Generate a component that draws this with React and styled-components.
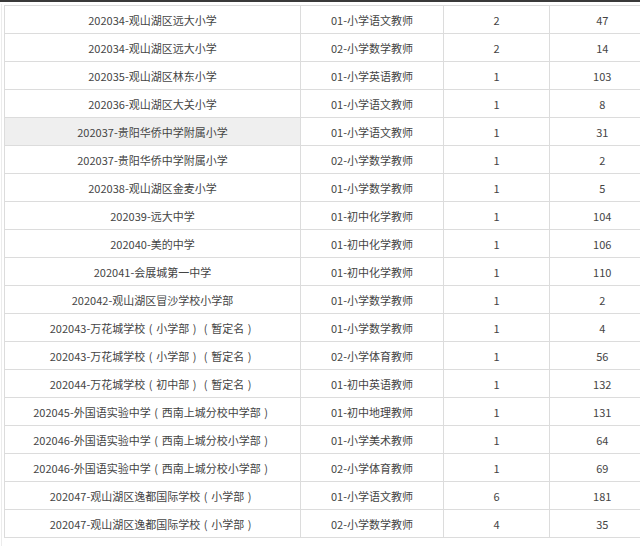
import React from "react";
import styled, { createGlobalStyle } from "styled-components";

const Global = createGlobalStyle`
  html, body { margin: 0; padding: 0; background: #fff; }
  body { font-family: "Noto Sans CJK SC", "Noto Sans", sans-serif; overflow: hidden; }
`;

const Page = styled.div`
  width: 640px;
  height: 556px;
  overflow: hidden;
  border-top: 2px solid #3a3a3a;
  box-sizing: border-box;
  padding: 3px 0 0 4px;
  position: relative;
`;

const Guide = styled.div`
  position: absolute;
  left: 1px;
  top: 2px;
  bottom: 10px;
  width: 1px;
  background: #ececec;
`;

const Table = styled.table`
  border-collapse: collapse;
  table-layout: fixed;
  width: 650px;
  font-size: 11px;
  color: #444;
`;

const Col = styled.col`
  width: ${(p) => p.$w}px;
`;

const Cell = styled.td`
  border: 1px solid #dcdcdc;
  border-right: ${(p) => (p.$last ? "none" : "1px solid #dcdcdc")};
  height: 27px;
  padding: 0;
  text-align: center;
  vertical-align: middle;
  white-space: nowrap;
  line-height: 14px;
  background: ${(p) => (p.$hl ? "#efefef" : "transparent")};
`;

const Paren = styled.span`
  display: inline-block;
  width: 11px;
  text-align: center;
`;

const renderName = (s) =>
  s.split(/([（）])/).map((part, i) =>
    part === "（" ? <Paren key={i}>(</Paren> : part === "）" ? <Paren key={i}>)</Paren> : part
  );

const rows = [
  ["202034-观山湖区远大小学", "01-小学语文教师", "2", "47"],
  ["202034-观山湖区远大小学", "02-小学数学教师", "2", "14"],
  ["202035-观山湖区林东小学", "01-小学英语教师", "1", "103"],
  ["202036-观山湖区大关小学", "01-小学语文教师", "1", "8"],
  ["202037-贵阳华侨中学附属小学", "01-小学语文教师", "1", "31", true],
  ["202037-贵阳华侨中学附属小学", "02-小学数学教师", "1", "2"],
  ["202038-观山湖区金麦小学", "01-小学数学教师", "1", "5"],
  ["202039-远大中学", "01-初中化学教师", "1", "104"],
  ["202040-美的中学", "01-初中化学教师", "1", "106"],
  ["202041-会展城第一中学", "01-初中化学教师", "1", "110"],
  ["202042-观山湖区冒沙学校小学部", "01-小学数学教师", "1", "2"],
  ["202043-万花城学校（小学部）（暂定名）", "01-小学数学教师", "1", "4"],
  ["202043-万花城学校（小学部）（暂定名）", "02-小学体育教师", "1", "56"],
  ["202044-万花城学校（初中部）（暂定名）", "01-初中英语教师", "1", "132"],
  ["202045-外国语实验中学（西南上城分校中学部）", "01-初中地理教师", "1", "131"],
  ["202046-外国语实验中学（西南上城分校小学部）", "01-小学美术教师", "1", "64"],
  ["202046-外国语实验中学（西南上城分校小学部）", "02-小学体育教师", "1", "69"],
  ["202047-观山湖区逸都国际学校（小学部）", "01-小学语文教师", "6", "181"],
  ["202047-观山湖区逸都国际学校（小学部）", "02-小学数学教师", "4", "35"],
];

export default function App() {
  return (
    <>
      <Global />
      <Page>
        <Guide />
        <Table>
          <colgroup>
            <Col $w={296} />
            <Col $w={143} />
            <Col $w={106} />
            <Col $w={105} />
          </colgroup>
          <tbody>
            {rows.map((r, i) => (
              <tr key={i}>
                <Cell $hl={r[4]}>{renderName(r[0])}</Cell>
                <Cell>{r[1]}</Cell>
                <Cell>{r[2]}</Cell>
                <Cell $last>{r[3]}</Cell>
              </tr>
            ))}
          </tbody>
        </Table>
      </Page>
    </>
  );
}
